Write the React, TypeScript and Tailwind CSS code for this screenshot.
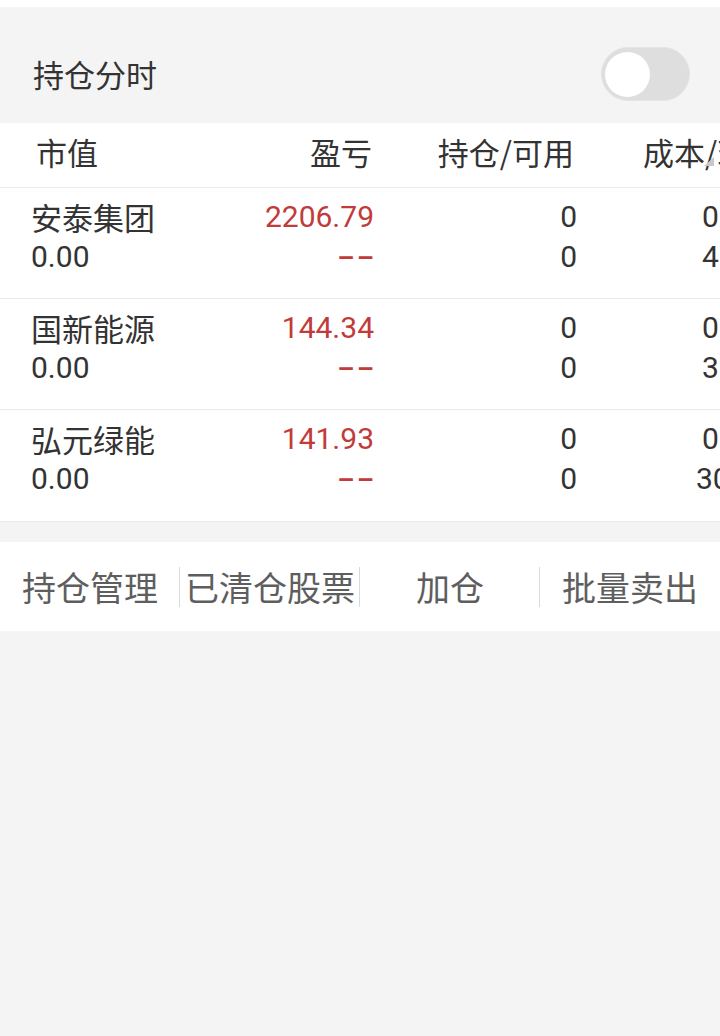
import React from 'react'

const cjk = { fontFamily: '"Noto Sans CJK SC", "Noto Sans", sans-serif' }
const num = { fontFamily: 'Roboto, "Noto Sans", sans-serif' }

type Row = {
  name: string
  value: string
  pnl: string
  hold: string
  avail: string
  cost: string
  price: string
  priceWide?: boolean
}

const rows: Row[] = [
  { name: '安泰集团', value: '0.00', pnl: '2206.79', hold: '0', avail: '0', cost: '0.000', price: '4.320' },
  { name: '国新能源', value: '0.00', pnl: '144.34', hold: '0', avail: '0', cost: '0.000', price: '3.510' },
  { name: '弘元绿能', value: '0.00', pnl: '141.93', hold: '0', avail: '0', cost: '0.000', price: '30.42', priceWide: true },
]

const actions = ['持仓管理', '已清仓股票', '加仓', '批量卖出']

function Toggle() {
  return (
    <div className="w-[89px] h-[54px] rounded-full bg-[#dedede] border border-[#e4e4e4] flex items-center pl-[3px]">
      <div className="w-[45px] h-[45px] rounded-full bg-white" />
    </div>
  )
}

export default function App() {
  return (
    <div className="w-[720px] min-h-[1036px] bg-[#f4f4f4] overflow-hidden" style={cjk}>
      <div className="h-[7px] bg-white" />

      {/* 持仓分时 */}
      <div className="flex items-center justify-between pl-[33px] pr-[30px] pt-[40px] pb-[22px]">
        <span className="text-[31px] leading-[54px] text-[#333]">持仓分时</span>
        <Toggle />
      </div>

      {/* 持仓列表 */}
      <div className="bg-white border-b border-[#ebebeb]">
        <div className="relative flex h-[65px] items-center pb-[5px] pl-[31px] border-b border-[#ebebeb] text-[31px] text-[#333] whitespace-nowrap">
          <div className="w-[190px] shrink-0 pl-[5px]">市值</div>
          <div className="w-[153px] shrink-0 text-right pr-[2px]">盈亏</div>
          <div className="w-[203px] shrink-0 text-right pr-[3px]">持仓/可用</div>
          <div className="w-[200px] shrink-0 pl-[66px]">成本/现价</div>
          <svg className="absolute left-[703px] top-[25px]" width="12" height="18" viewBox="0 0 12 18">
            <polygon points="1,18 11,9 11,18" fill="#c8c8c8" />
          </svg>
        </div>

        {rows.map((r, i) => (
          <div
            key={r.name}
            className={`flex pl-[31px] pt-[9px] pb-[22px] h-[111px] leading-[40px] whitespace-nowrap ${
              i < rows.length - 1 ? 'border-b border-[#ebebeb]' : ''
            }`}
          >
            <div className="w-[190px] shrink-0 text-[#333]">
              <div className="text-[31px]">{r.name}</div>
              <div className="text-[30px]" style={num}>{r.value}</div>
            </div>
            <div className="w-[153px] shrink-0 text-right text-[30px] text-[#c23b3b]" style={num}>
              <div>{r.pnl}</div>
              <div>
                <span className="inline-block origin-right scale-x-[1.75] font-medium tracking-[1px] -mr-[2px]">--</span>
              </div>
            </div>
            <div className="w-[203px] shrink-0 text-right text-[30px] text-[#333]" style={num}>
              <div>{r.hold}</div>
              <div>{r.avail}</div>
            </div>
            <div className="w-[200px] shrink-0 text-[30px] text-[#333]" style={num}>
              <div className="pl-[125px]">{r.cost}</div>
              <div className={r.priceWide ? 'pl-[119px]' : 'pl-[125px]'}>{r.price}</div>
            </div>
          </div>
        ))}
      </div>

      {/* 操作栏 */}
      <div className="mt-[20px] bg-white h-[89px] grid grid-cols-4 items-center">
        {actions.map((a, i) => (
          <div
            key={a}
            className={`h-[40px] flex items-center justify-center text-[34px] text-[#5e5e5e] whitespace-nowrap ${
              i > 0 ? 'border-l border-[#d9d9d9] -ml-px' : ''
            }`}
          >
            {a}
          </div>
        ))}
      </div>
    </div>
  )
}
